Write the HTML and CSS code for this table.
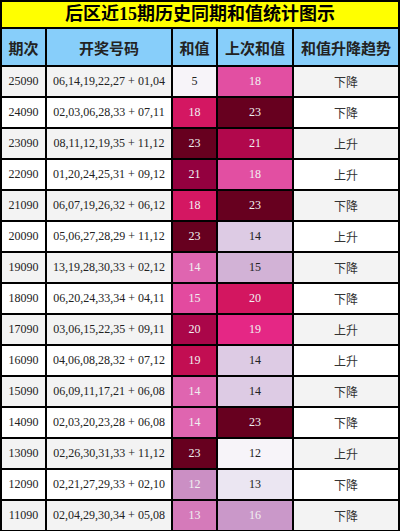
FILE: index.html
```html
<!DOCTYPE html>
<html lang="zh-CN">
<head>
    <meta charset="UTF-8">
    <meta name="viewport" content="width=device-width, initial-scale=1.0">
    <title>后区近15期历史同期和值统计图示</title>
    <link rel="stylesheet" href="styles.css">
</head>
<body>

<table class="stats">
    <colgroup>
        <col class="c-issue">
        <col class="c-nums">
        <col class="c-sum">
        <col class="c-prev">
        <col class="c-trend">
    </colgroup>
    <thead>
        <tr class="title-row">
            <th colspan="5">后区近15期历史同期和值统计图示</th>
        </tr>
        <tr class="head-row">
            <th>期次</th>
            <th>开奖号码</th>
            <th>和值</th>
            <th>上次和值</th>
            <th>和值升降趋势</th>
        </tr>
    </thead>
    <tbody>
        <tr>
            <td>25090</td>
            <td>06,14,19,22,27 + 01,04</td>
            <td style="background:#f7f4f9">5</td>
            <td class="lt" style="background:#e24fa2">18</td>
            <td class="trend">下降</td>
        </tr>
        <tr>
            <td>24090</td>
            <td>02,03,06,28,33 + 07,11</td>
            <td class="lt" style="background:#d41762">18</td>
            <td class="lt" style="background:#67001f">23</td>
            <td class="trend">下降</td>
        </tr>
        <tr>
            <td>23090</td>
            <td>08,11,12,19,35 + 11,12</td>
            <td class="lt" style="background:#67001f">23</td>
            <td class="lt" style="background:#b1084c">21</td>
            <td class="trend">上升</td>
        </tr>
        <tr>
            <td>22090</td>
            <td>01,20,24,25,31 + 09,12</td>
            <td class="lt" style="background:#93003f">21</td>
            <td class="lt" style="background:#e24fa2">18</td>
            <td class="trend">上升</td>
        </tr>
        <tr>
            <td>21090</td>
            <td>06,07,19,26,32 + 06,12</td>
            <td class="lt" style="background:#d41762">18</td>
            <td class="lt" style="background:#67001f">23</td>
            <td class="trend">下降</td>
        </tr>
        <tr>
            <td>20090</td>
            <td>05,06,27,28,29 + 11,12</td>
            <td class="lt" style="background:#67001f">23</td>
            <td style="background:#ddcbe4">14</td>
            <td class="trend">上升</td>
        </tr>
        <tr>
            <td>19090</td>
            <td>13,19,28,30,33 + 02,12</td>
            <td class="lt" style="background:#df65b0">14</td>
            <td style="background:#d2b2d6">15</td>
            <td class="trend">下降</td>
        </tr>
        <tr>
            <td>18090</td>
            <td>06,20,24,33,34 + 04,11</td>
            <td class="lt" style="background:#e34a9f">15</td>
            <td class="lt" style="background:#d31660">20</td>
            <td class="trend">下降</td>
        </tr>
        <tr>
            <td>17090</td>
            <td>03,06,15,22,35 + 09,11</td>
            <td class="lt" style="background:#aa0649">20</td>
            <td class="lt" style="background:#e52785">19</td>
            <td class="trend">上升</td>
        </tr>
        <tr>
            <td>16090</td>
            <td>04,06,08,28,32 + 07,12</td>
            <td class="lt" style="background:#c20e52">19</td>
            <td style="background:#ddcbe4">14</td>
            <td class="trend">上升</td>
        </tr>
        <tr>
            <td>15090</td>
            <td>06,09,11,17,21 + 06,08</td>
            <td class="lt" style="background:#df65b0">14</td>
            <td style="background:#ddcbe4">14</td>
            <td class="trend">下降</td>
        </tr>
        <tr>
            <td>14090</td>
            <td>02,03,20,23,28 + 06,08</td>
            <td class="lt" style="background:#df65b0">14</td>
            <td class="lt" style="background:#67001f">23</td>
            <td class="trend">下降</td>
        </tr>
        <tr>
            <td>13090</td>
            <td>02,26,30,31,33 + 11,12</td>
            <td class="lt" style="background:#67001f">23</td>
            <td style="background:#f7f4f9">12</td>
            <td class="trend">上升</td>
        </tr>
        <tr>
            <td>12090</td>
            <td>02,21,27,29,33 + 02,10</td>
            <td class="lt" style="background:#cb8fc4">12</td>
            <td style="background:#ebe6f2">13</td>
            <td class="trend">下降</td>
        </tr>
        <tr>
            <td>11090</td>
            <td>02,04,29,30,34 + 05,08</td>
            <td class="lt" style="background:#d57aba">13</td>
            <td class="lt" style="background:#ca98c9">16</td>
            <td class="trend">下降</td>
        </tr>
    </tbody>
</table>

</body>
</html>
```

FILE: styles.css
```css
body {
    margin: 0;
    padding: 0;
    background-color: #ffffff;
    font-family: "Liberation Serif", "Noto Sans CJK SC", serif;
    color: #222;
}
.stats {
    width: 400px;
    table-layout: fixed;
    border-collapse: separate;
    border-spacing: 2px;
    background-color: #000; /* black grid lines */
}
.c-issue { width: 43px; }
.c-nums { width: 124px; }
.c-sum { width: 43px; }
.c-prev { width: 74px; }
.c-trend { width: 104px; }
.stats th,
.stats td {
    padding: 0;
    text-align: center;
    vertical-align: middle;
}
.title-row th {
    height: 25px;
    background-color: #ffff00;
    color: #000;
    font-size: 18px;
    font-weight: bold;
    line-height: 25px;
}
.head-row th {
    height: 36px;
    background-color: #87cefa;
    color: #222;
    font-size: 15px;
    font-weight: bold;
}
.stats td {
    height: 29px;
    font-size: 12px;
    background-color: #ffffff;
}
.stats tbody tr:nth-child(odd) td {
    background-color: #f3f3f3;
}
.stats td.trend {
    font-family: "Noto Sans CJK SC", sans-serif;
    font-size: 12px;
    color: #333;
}
.stats td.lt {
    color: #f1f1f1;
}
```
